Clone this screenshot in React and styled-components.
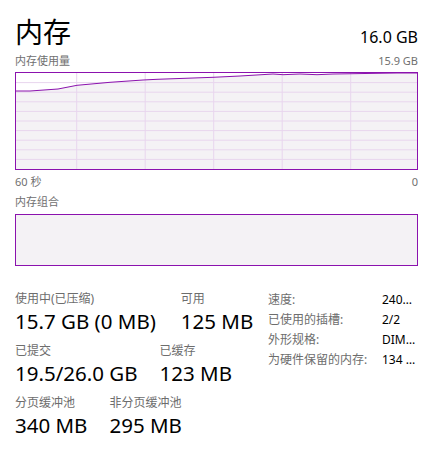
import React from 'react'
import styled, { createGlobalStyle } from 'styled-components'

const GlobalStyle = createGlobalStyle`
    html, body {
        margin: 0;
        padding: 0;
        background: #ffffff;
    }
    body {
        font-family: "Noto Sans", "Noto Sans CJK SC", sans-serif;
        color: #000000;
    }
`;

const Page = styled.div`
    width: 431px;
    height: 450px;
    box-sizing: border-box;
    padding: 12px 13px 0 15px;
    overflow: hidden;
`;

const Header = styled.div`
    display: flex;
    justify-content: space-between;
    align-items: baseline;
    height: 38px;
`;

const Title = styled.h1`
    margin: 0;
    font-family: "Noto Sans CJK SC", sans-serif;
    font-weight: 400;
    font-size: 28px;
    line-height: 38px;
`;

const Total = styled.div`
    font-size: 16px;
    line-height: 38px;
`;

const AxisRow = styled.div`
    display: flex;
    justify-content: space-between;
    align-items: center;
    height: 20px;
    margin-top: ${p => p.$top || 0}px;
    font-size: 11px;
    color: #707070;
`;

const Chart = styled.div`
    position: relative;
    height: ${p => p.$height}px;
    margin-top: ${p => p.$top || 0}px;
    border: 1px solid #8b12ae;
    background: #f4f2f5;
    box-sizing: border-box;
    overflow: hidden;

    svg {
        display: block;
        width: 100%;
        height: 100%;
    }
`;

const Stats = styled.div`
    display: flex;
    margin-top: 23px;
`;

const LeftStats = styled.div`
    flex: 1;
    display: flex;
    flex-direction: column;
    gap: 8px;
`;

const StatRow = styled.div`
    display: flex;
    gap: ${p => p.$gap || 22}px;
`;

const Stat = styled.div`
    display: flex;
    flex-direction: column;
`;

const Label = styled.div`
    font-size: 12px;
    line-height: 20px;
    color: #6d6d6d;
    white-space: nowrap;
`;

const Value = styled.div`
    font-size: 20.5px;
    line-height: 24px;
    white-space: nowrap;
`;

const Specs = styled.div`
    width: 150px;
    display: grid;
    grid-template-columns: 114px 34px;
    grid-auto-rows: 20px;
    align-items: center;
    font-size: 12px;
`;

const SpecLabel = styled.div`
    color: #6d6d6d;
    white-space: nowrap;
`;

const SpecValue = styled.div`
    color: #000000;
    white-space: nowrap;
    overflow: hidden;
    text-overflow: ellipsis;
`;

const usage = [
    [0, 18], [14, 18], [42, 16], [61, 12.3], [94, 9.3], [127, 7], [141, 6.3],
    [197, 4.3], [224, 3], [257, 1], [267, 1.7], [284, 1], [301, 1.7], [317, 1],
    [381, 0], [401, 0],
];

function UsageChart() {
    const line = usage.map(p => p.join(',')).join(' ');
    const vertical = [60.7, 129.2, 197.7, 266.2, 334.7];
    const horizontal = [1, 2, 3, 4, 5, 6, 7, 8, 9].map(i => i * 9.6);
    return (
        <svg viewBox="0 0 401 96" preserveAspectRatio="none">
            <polygon points={`0,0 ${line} 401,0`} fill="#ffffff" />
            {horizontal.map(y => (
                <line key={'h' + y} x1="0" x2="401" y1={y} y2={y} stroke="#e8d6ee" strokeWidth="1" />
            ))}
            {vertical.map(x => (
                <line key={'v' + x} x1={x} x2={x} y1="0" y2="96" stroke="#e8d6ee" strokeWidth="1" />
            ))}
            <polyline points={line} fill="none" stroke="#8b12ae" strokeWidth="1" />
        </svg>
    );
}

const rows = [
    {
        gap: 25,
        items: [
            { label: '使用中(已压缩)', value: '15.7 GB (0 MB)' },
            { label: '可用', value: '125 MB' },
        ],
    },
    {
        gap: 22,
        items: [
            { label: '已提交', value: '19.5/26.0 GB' },
            { label: '已缓存', value: '123 MB' },
        ],
    },
    {
        gap: 22,
        items: [
            { label: '分页缓冲池', value: '340 MB' },
            { label: '非分页缓冲池', value: '295 MB' },
        ],
    },
];

const specs = [
    ['速度:', '2400 MHz'],
    ['已使用的插槽:', '2/2'],
    ['外形规格:', 'DIMM4'],
    ['为硬件保留的内存:', '134 MB'],
];

function App() {
    return (
        <>
            <GlobalStyle />
            <Page>
                <Header>
                    <Title>内存</Title>
                    <Total>16.0 GB</Total>
                </Header>
                <AxisRow>
                    <span>内存使用量</span>
                    <span>15.9 GB</span>
                </AxisRow>
                <Chart $height={98} $top={2}>
                    <UsageChart />
                </Chart>
                <AxisRow $top={1}>
                    <span>60 秒</span>
                    <span>0</span>
                </AxisRow>
                <AxisRow>
                    <span>内存组合</span>
                </AxisRow>
                <Chart $height={52} $top={3} />
                <Stats>
                    <LeftStats>
                        {rows.map((row, i) => (
                            <StatRow key={i} $gap={row.gap}>
                                {row.items.map(s => (
                                    <Stat key={s.label}>
                                        <Label>{s.label}</Label>
                                        <Value>{s.value}</Value>
                                    </Stat>
                                ))}
                            </StatRow>
                        ))}
                    </LeftStats>
                    <Specs>
                        {specs.map(([k, v]) => (
                            <React.Fragment key={k}>
                                <SpecLabel>{k}</SpecLabel>
                                <SpecValue>{v}</SpecValue>
                            </React.Fragment>
                        ))}
                    </Specs>
                </Stats>
            </Page>
        </>
    );
}

export default App;
